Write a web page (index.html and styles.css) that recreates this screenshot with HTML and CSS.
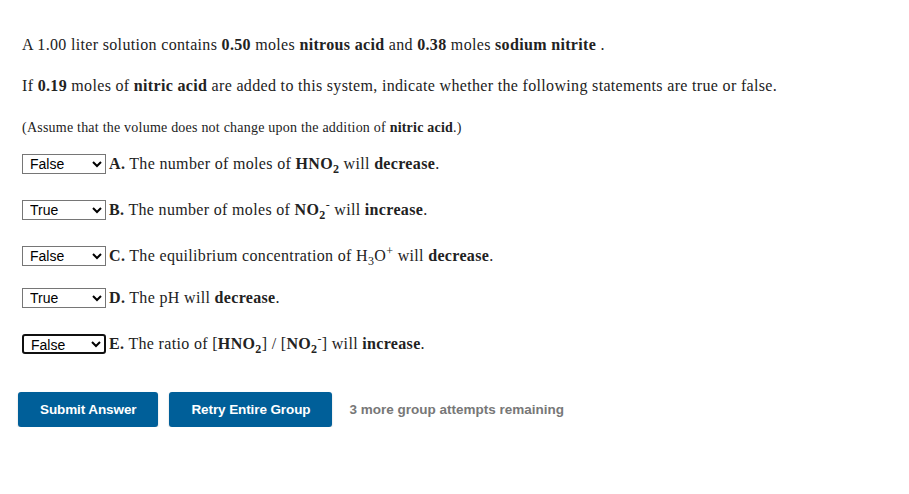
FILE: index.html
```html
<!DOCTYPE html>
<html>
<head>
<meta charset="utf-8">
<link rel="stylesheet" href="styles.css">
</head>
<body>
<div class="page">
  <p class="intro">A 1.00 liter solution contains <b>0.50</b> moles <b>nitrous acid</b> and <b>0.38</b> moles <b>sodium nitrite</b> .</p>
  <p class="intro">If <b>0.19</b> moles of <b>nitric acid</b> are added to this system, indicate whether the following statements are true or false.</p>
  <p class="note">(Assume that the volume does not change upon the addition of <b>nitric acid</b>.)</p>
  <div class="rows">
    <div class="row">
      <select class="sel"><option selected>False</option><option>True</option></select>
      <span class="stmt"><b>A.</b> The number of moles of <b>HNO<sub>2</sub></b> will <b>decrease</b>.</span>
    </div>
    <div class="row tall">
      <select class="sel"><option>False</option><option selected>True</option></select>
      <span class="stmt"><b>B.</b> The number of moles of <b>NO<sub>2</sub></b><sup>-</sup> will <b>increase</b>.</span>
    </div>
    <div class="row tall">
      <select class="sel"><option selected>False</option><option>True</option></select>
      <span class="stmt"><b>C.</b> The equilibrium concentration of H<sub>3</sub>O<sup>+</sup> will <b>decrease</b>.</span>
    </div>
    <div class="row">
      <select class="sel"><option>False</option><option selected>True</option></select>
      <span class="stmt"><b>D.</b> The pH will <b>decrease</b>.</span>
    </div>
    <div class="row tall">
      <select class="sel focus"><option selected>False</option><option>True</option></select>
      <span class="stmt"><b>E.</b> The ratio of [<b>HNO<sub>2</sub></b>] / [<b>NO<sub>2</sub></b><sup>-</sup>] will <b>increase</b>.</span>
    </div>
  </div>
  <div class="actions">
    <button class="btn">Submit Answer</button>
    <button class="btn">Retry Entire Group</button>
    <span class="remain">3 more group attempts remaining</span>
  </div>
</div>
</body>
</html>
```
FILE: styles.css
```css
html, body {
  margin: 0;
  padding: 0;
  background: #fff;
}
.page {
  padding: 34px 0 0 22px;
  font-family: "Liberation Serif", "Times New Roman", serif;
  font-size: 16px;
  letter-spacing: 0.33px;
  color: #222;
}
.intro {
  margin: 0 0 19px;
  line-height: 22px;
}
.note {
  margin: 0 0 16px;
  padding-top: 2px;
  font-size: 14px;
  line-height: 20px;
  letter-spacing: 0.22px;
}
.rows {
  display: flex;
  flex-direction: column;
  gap: 22px;
}
.row {
  display: flex;
  align-items: center;
  height: 20px;
}
.row.tall {
  padding-top: 4px;
}
.sel {
  width: 84px;
  height: 20px;
  margin: 0 3px 0 0;
  padding: 0 0 0 3px;
  font-family: "Liberation Sans", Arial, sans-serif;
  font-size: 14px;
  letter-spacing: 0;
  color: #000;
  border: 1px solid #767676;
  border-radius: 0;
  background: #fff;
}
.sel.focus {
  border: 2px solid #101010;
  border-radius: 3px;
}
.stmt {
  line-height: 20px;
}
sub, sup {
  font-size: 12px;
  line-height: 0;
}
.actions {
  display: flex;
  align-items: center;
  margin: 38px 0 0 -4px;
  letter-spacing: 0;
}
.btn {
  height: 35px;
  padding: 0 22px;
  margin-right: 11px;
  border: none;
  border-radius: 3px;
  background: #005f99;
  color: #fff;
  font-family: "Liberation Sans", Arial, sans-serif;
  font-weight: bold;
  font-size: 13.5px;
  letter-spacing: -0.1px;
  box-shadow: 0 1px 2px rgba(0,0,0,0.2);
}
.remain {
  margin-left: 6px;
  font-family: "Liberation Sans", Arial, sans-serif;
  font-weight: bold;
  font-size: 13.5px;
  color: #777;
}
```
